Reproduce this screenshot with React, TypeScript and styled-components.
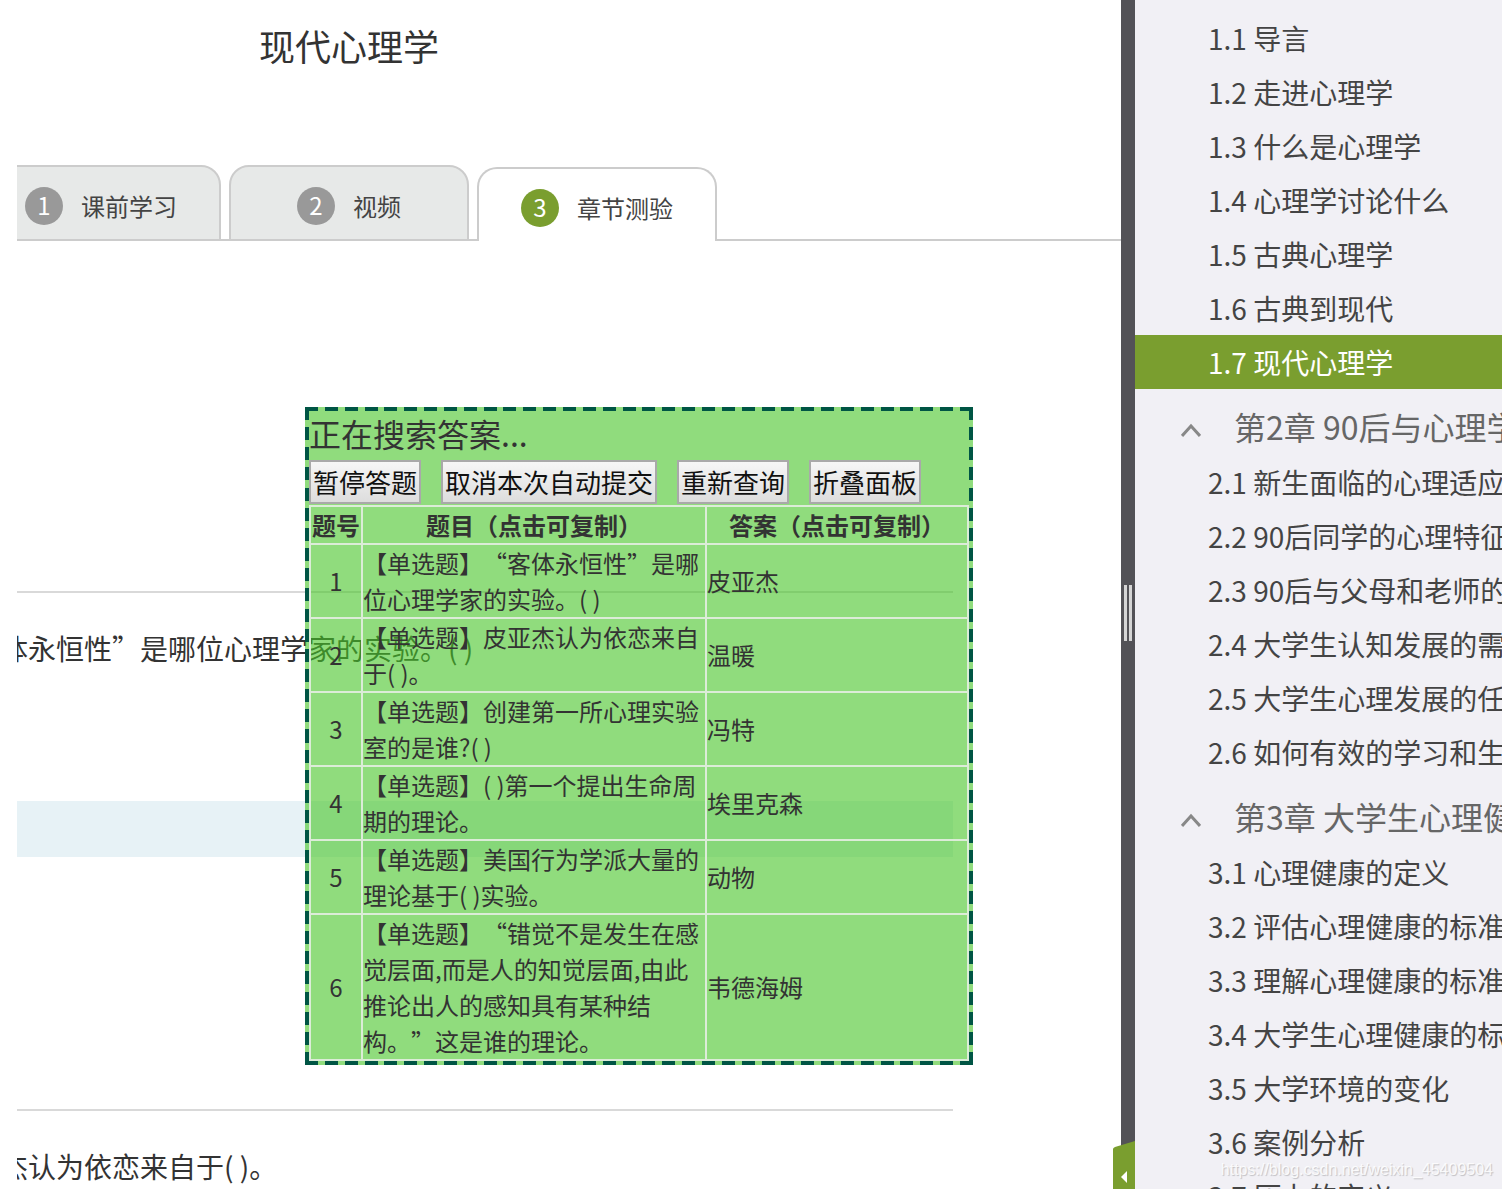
import React from "react";
import styled, { createGlobalStyle } from "styled-components";

const GlobalStyle = createGlobalStyle`
  *, *::before, *::after { box-sizing: border-box; }
  body {
    margin: 0;
    background: #fff;
    color: #333;
    font-family: "Noto Sans CJK SC", "Noto Sans", sans-serif;
    text-spacing-trim: space-all;
  }
  button { font-family: inherit; cursor: pointer; }
`;

const Shell = styled.div`
  position: relative;
  display: flex;
  height: 100vh;
  overflow: hidden;
`;

const Main = styled.main`
  flex: 1;
  min-width: 0;
  margin-left: 17px;
  overflow: hidden;
`;

const Header = styled.header`
  margin-left: -36px;
`;

const Title = styled.h1`
  width: 736px;
  margin: 0 0 75px;
  font-size: 36px;
  font-weight: 400;
  line-height: 90px;
  text-align: center;
`;

const TabStrip = styled.div`
  display: flex;
  align-items: flex-end;
  gap: 8px;
  border-bottom: 2px solid #ccc;
`;

const Tab = styled.button<{ $active?: boolean }>`
  display: flex;
  flex: none;
  align-items: center;
  justify-content: center;
  gap: 18px;
  width: 240px;
  height: ${(p) => (p.$active ? 74 : 76)}px;
  margin: 0 0 -2px;
  padding: ${(p) => (p.$active ? "7px 0 2px" : "6px 0 0")};
  border: 2px solid #ccc;
  border-bottom-width: ${(p) => (p.$active ? 0 : 2)}px;
  border-radius: 20px 20px 0 0;
  background: ${(p) => (p.$active ? "#fff" : "#e7e9e8")};
  color: #444;
  font-size: 24px;
  line-height: 36px;
`;

const TabNumber = styled.span<{ $active?: boolean }>`
  width: 38px;
  height: 38px;
  border-radius: 50%;
  background: ${(p) => (p.$active ? "#7a9e2f" : "#999")};
  color: #fff;
  line-height: 36px;
  text-align: center;
`;

const Questions = styled.div`
  margin: 350px 168px 0 -17px;
`;

const Question = styled.section`
  min-height: 518px;
  padding-top: 34px;
  border-top: 2px solid #d9d9d9;
`;

const QuestionText = styled.p`
  margin: 0 0 132px;
  font-size: 28px;
  line-height: 42px;
  white-space: nowrap;
`;

const AnswerBand = styled.div`
  height: 56px;
  background: #e7f2f6;
`;

const Divider = styled.div`
  position: relative;
  flex: none;
  width: 14px;
  background: #535257;
`;

const Grip = styled.div`
  width: 8px;
  height: 56px;
  margin: 585px auto 0;
  border: solid #d5d5d5;
  border-width: 0 3px;
`;

const CollapseButton = styled.button`
  position: absolute;
  right: 0;
  bottom: 0;
  width: 22px;
  height: 48px;
  padding: 0;
  border: 0;
  background: none;
  svg { display: block; }
`;

const Sidebar = styled.nav`
  flex: none;
  width: 367px;
  padding-top: 11px;
  overflow: hidden;
  background: #f1f0f5;
  white-space: nowrap;
`;

const Chapter = styled.button`
  display: flex;
  align-items: center;
  gap: 33px;
  width: 100%;
  height: 66px;
  padding: 8px 0 0 46px;
  border: 0;
  background: none;
  color: #666;
  font-size: 32px;
  line-height: 48px;
  white-space: nowrap;
  svg { flex: none; margin-top: 8px; }
`;

const Lesson = styled.a<{ $current?: boolean }>`
  display: block;
  padding-left: 73px;
  background: ${(p) => (p.$current ? "#7a9e2f" : "transparent")};
  color: ${(p) => (p.$current ? "#fff" : "#444")};
  font-size: 28px;
  line-height: 54px;
  text-decoration: none;
`;

const dashX = "repeating-linear-gradient(90deg, #005544 0 13px, transparent 13px calc((100% - 13px) / 33))";
const dashY = "repeating-linear-gradient(180deg, #005544 0 13px, transparent 13px calc((100% - 13px) / 32))";

const Panel = styled.aside`
  position: absolute;
  top: 407px;
  left: 305px;
  width: 668px;
  border: 4px solid transparent;
  background:
    ${dashX} top / 100% 4px no-repeat border-box,
    ${dashX} bottom / 100% 4px no-repeat border-box,
    ${dashY} left / 4px 100% no-repeat border-box,
    ${dashY} right / 4px 100% no-repeat border-box;
  background-color: rgba(70, 196, 38, 0.6);
`;

const Status = styled.div`
  padding-bottom: 4px;
  font-size: 32px;
  line-height: 44px;
`;

const Actions = styled.div`
  display: flex;
  gap: 20px;
  padding: 1px 0;
`;

const ActionButton = styled.button`
  height: 44px;
  padding: 0 2px;
  border: 2px solid #a9a9a9;
  background: linear-gradient(#f6f6f6, #dddddd);
  color: #111;
  font-size: 26px;
  line-height: 40px;
  white-space: nowrap;
`;

const AnswerTable = styled.table`
  width: 100%;
  table-layout: fixed;
  border-collapse: collapse;
  font-size: 24px;
  line-height: 36px;
  th, td {
    padding: 0;
    border: 2px solid #dcecd8;
  }
  th { font-weight: 700; }
`;

const NumberCell = styled.td`
  text-align: center;
`;

const NumberCol = styled.col`
  width: 52px;
`;

const QuestionCol = styled.col`
  width: 344px;
`;

const Watermark = styled.div`
  position: absolute;
  right: 9px;
  bottom: 8px;
  color: rgba(255, 255, 255, 0.85);
  font: 16px/22px "Liberation Sans", sans-serif;
  text-shadow: 1px 1px 1px rgba(0, 0, 0, 0.2);
  pointer-events: none;
`;

const tabs = ["课前学习", "视频", "章节测验"];

const rows = [
  ["【单选题】“客体永恒性”是哪位心理学家的实验。( )", "皮亚杰"],
  ["【单选题】皮亚杰认为依恋来自于( )。", "温暖"],
  ["【单选题】创建第一所心理实验室的是谁?( )", "冯特"],
  ["【单选题】( )第一个提出生命周期的理论。", "埃里克森"],
  ["【单选题】美国行为学派大量的理论基于( )实验。", "动物"],
  ["【单选题】“错觉不是发生在感觉层面,而是人的知觉层面,由此推论出人的感知具有某种结构。”这是谁的理论。", "韦德海姆"],
];

const chapters = [
  {
    title: "",
    lessons: ["1.1 导言", "1.2 走进心理学", "1.3 什么是心理学", "1.4 心理学讨论什么", "1.5 古典心理学", "1.6 古典到现代", "1.7 现代心理学"],
  },
  {
    title: "第2章 90后与心理学",
    lessons: ["2.1 新生面临的心理适应", "2.2 90后同学的心理特征", "2.3 90后与父母和老师的", "2.4 大学生认知发展的需", "2.5 大学生心理发展的任", "2.6 如何有效的学习和生"],
  },
  {
    title: "第3章 大学生心理健",
    lessons: ["3.1 心理健康的定义", "3.2 评估心理健康的标准", "3.3 理解心理健康的标准", "3.4 大学生心理健康的标", "3.5 大学环境的变化", "3.6 案例分析", "3.7 压力的定义"],
  },
];

export default function App() {
  return (
    <Shell lang="zh-CN">
      <GlobalStyle />
      <Main>
        <Header>
          <Title>现代心理学</Title>
          <TabStrip role="tablist">
            {tabs.map((label, i) => (
              <Tab key={label} type="button" role="tab" aria-selected={i === 2} $active={i === 2}>
                <TabNumber $active={i === 2}>{i + 1}</TabNumber>
                {label}
              </Tab>
            ))}
          </TabStrip>
        </Header>
        <Questions>
          <Question>
            <QuestionText>体永恒性”是哪位心理学家的实验。( )</QuestionText>
            <AnswerBand />
          </Question>
          <Question>
            <QuestionText>杰认为依恋来自于( )。</QuestionText>
          </Question>
        </Questions>
      </Main>

      <Divider>
        <Grip />
        <CollapseButton type="button" aria-label="收起目录">
          <svg width="22" height="48" viewBox="0 0 22 48">
            <path d="M0 8Q0 7 2 6L22 0V48H0Z" fill="#7a9e2f" />
            <path d="M8 36L14 30V42Z" fill="#fff" />
          </svg>
        </CollapseButton>
      </Divider>

      <Sidebar>
        {chapters.map((chapter) => (
          <div key={chapter.title}>
            {chapter.title && (
              <Chapter type="button">
                <svg width="20" height="14" viewBox="0 0 20 14" fill="none" stroke="#888" strokeWidth="3">
                  <path d="M1 13L10 3L19 13" />
                </svg>
                {chapter.title}
              </Chapter>
            )}
            {chapter.lessons.map((lesson) => (
              <Lesson key={lesson} href="#" $current={lesson.startsWith("1.7")}>
                {lesson}
              </Lesson>
            ))}
          </div>
        ))}
      </Sidebar>

      <Panel>
        <Status>正在搜索答案...</Status>
        <Actions>
          <ActionButton type="button">暂停答题</ActionButton>
          <ActionButton type="button">取消本次自动提交</ActionButton>
          <ActionButton type="button">重新查询</ActionButton>
          <ActionButton type="button">折叠面板</ActionButton>
        </Actions>
        <AnswerTable>
          <colgroup>
            <NumberCol />
            <QuestionCol />
            <col />
          </colgroup>
          <thead>
            <tr>
              <th>题号</th>
              <th>题目（点击可复制）</th>
              <th>答案（点击可复制）</th>
            </tr>
          </thead>
          <tbody>
            {rows.map(([question, answer], i) => (
              <tr key={question}>
                <NumberCell>{i + 1}</NumberCell>
                <td>{question}</td>
                <td>{answer}</td>
              </tr>
            ))}
          </tbody>
        </AnswerTable>
      </Panel>

      <Watermark>https://blog.csdn.net/weixin_45409504</Watermark>
    </Shell>
  );
}
